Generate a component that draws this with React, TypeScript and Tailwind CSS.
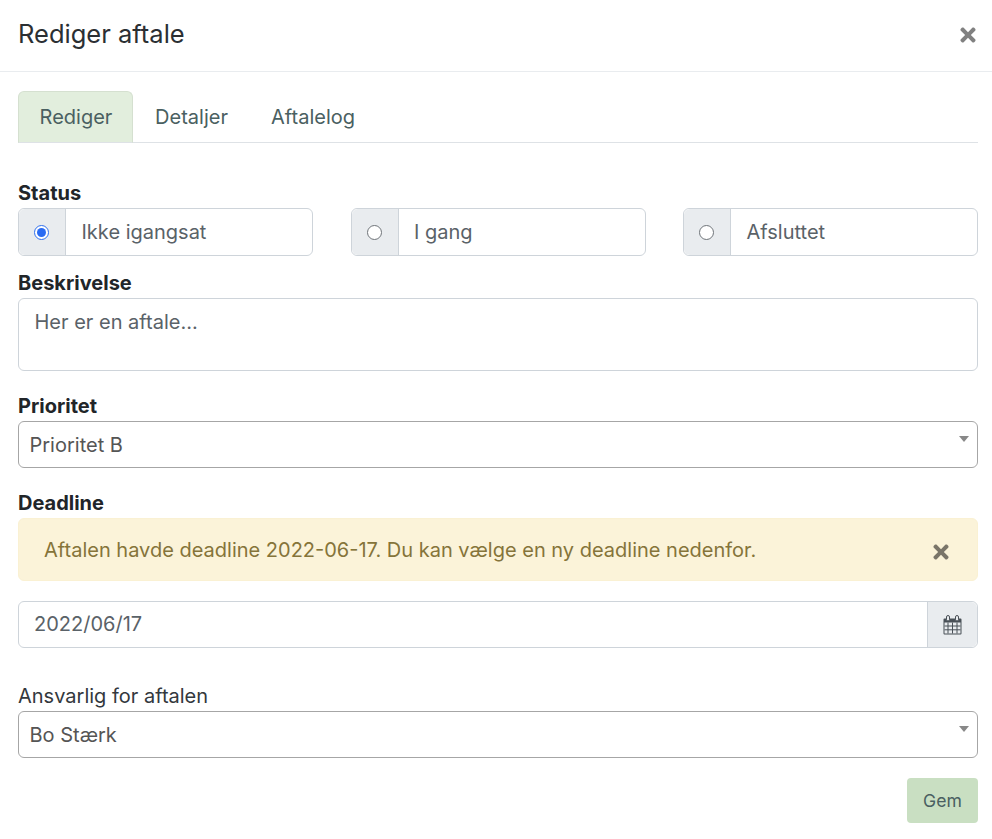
import { FaTimes } from "react-icons/fa";

function Radio({ checked }: { checked?: boolean }) {
  return (
    <span className={"flex h-[15px] w-[15px] items-center justify-center rounded-full border bg-white " + (checked ? "border-[#2f6fed]" : "border-[#6f7479]")}>
      {checked && <span className="h-[9px] w-[9px] rounded-full bg-[#2a6bf2]" />}
    </span>
  );
}

function StatusOption({ label, checked }: { label: string; checked?: boolean }) {
  return (
    <div className="flex h-12 w-[295px] rounded-md border border-[#ced4da] bg-white">
      <div className="flex w-[47px] shrink-0 items-center justify-center rounded-l-md border-r border-[#ced4da] bg-[#e9ecef] pr-[1px]">
        <Radio checked={checked} />
      </div>
      <div className="flex items-center pl-[15.5px] text-[20px] text-[#5a6268]">{label}</div>
    </div>
  );
}

function SelectBox({ value }: { value: string }) {
  return (
    <div className="relative flex h-[47px] items-center rounded-md border border-[#a6a6a6] bg-white pl-[10.5px] text-[20px] text-[#555]">
      <span className="mt-[1px]">{value}</span>
      <span className="absolute right-[8px] top-[14px] h-0 w-0 border-x-[5px] border-t-[6px] border-x-transparent border-t-[#888]" />
    </div>
  );
}

function CalendarIcon() {
  return (
    <svg width="19" height="20" viewBox="0 0 19 20" fill="none">
      <path d="M1.5 3.5h16a1 1 0 0 1 1 1v14a1 1 0 0 1-1 1h-16a1 1 0 0 1-1-1v-14a1 1 0 0 1 1-1z" fill="#495057" />
      <rect x="1.5" y="7.5" width="16" height="11" fill="#e9ecef" />
      <path d="M5 7.5v11M9.5 7.5v11M14 7.5v11M1.5 11h16M1.5 14.8h16" stroke="#495057" strokeWidth="1" />
      <rect x="3.5" y="0.5" width="3" height="5.5" rx="1.5" fill="#e9ecef" stroke="#495057" />
      <rect x="12.5" y="0.5" width="3" height="5.5" rx="1.5" fill="#e9ecef" stroke="#495057" />
    </svg>
  );
}

export default function App() {
  return (
    <div className="h-[839px] w-[992px] overflow-hidden bg-white font-['Inter',sans-serif] text-[#212529]">
      <div className="flex h-[72px] items-center justify-between border-b border-[#e9ecef] pb-[5px] pl-[18px] pr-[13px]">
        <h1 className="mt-[1px] text-[25.5px] font-normal leading-[36px] text-[#2b2f33]">Rediger aftale</h1>
        <FaTimes className="mt-[4px] text-[#808080]" size={22} />
      </div>

      <div className="px-[18px] pr-[14px]">
        <div className="mt-[19px] flex h-[52px] border-b border-[#dee2e6] text-[20px] text-[#4a6061]">
          <div className="flex h-[52px] w-[115px] items-center justify-center rounded-t-md border border-[#d5e0d0] border-b-[#dee2e6] bg-[#e2eedd] pl-[1px]">Rediger</div>
          <div className="flex w-[117px] items-center justify-center">Detaljer</div>
          <div className="flex w-[126px] items-center justify-center">Aftalelog</div>
        </div>

        <div className="mt-[38px] text-[20px] font-bold leading-[24px]">Status</div>
        <div className="mt-[3px] flex justify-between">
          <StatusOption label="Ikke igangsat" checked />
          <StatusOption label="I gang" />
          <StatusOption label="Afsluttet" />
        </div>

        <div className="mt-[15px] text-[20px] font-bold leading-[24px]">Beskrivelse</div>
        <div className="mt-[3px] h-[73px] rounded-md border border-[#ced4da] px-[15.5px] pt-[9px] text-[20px] leading-[28px] text-[#5a6268]">Her er en aftale...</div>

        <div className="mt-[23px] text-[20px] font-bold leading-[24px]">Prioritet</div>
        <div className="mt-[3px]">
          <SelectBox value="Prioritet B" />
        </div>

        <div className="mt-[23px] text-[20px] font-bold leading-[24px]">Deadline</div>
        <div className="mt-[3px] flex h-[63px] items-center justify-between rounded-md border border-[#faf1d3] bg-[#fbf3d9] pl-[25px] pr-[25px] text-[20px] text-[#85743a]">
          <span className="mt-[1px]">Aftalen havde deadline 2022-06-17. Du kan vælge en ny deadline nedenfor.</span>
          <FaTimes className="mt-[5px] text-[#7a7569]" size={22} />
        </div>

        <div className="mt-[20px] flex h-[47px] rounded-md border border-[#ced4da]">
          <div className="-mt-[1px] flex flex-1 items-center pl-[15px] text-[20px] text-[#5a6268]">2022/06/17</div>
          <div className="flex w-[50px] items-center justify-center rounded-r-md border-l border-[#ced4da] bg-[#e9ecef]">
            <CalendarIcon />
          </div>
        </div>

        <div className="mt-[36px] text-[20px] leading-[24px] text-[#33383d]">Ansvarlig for aftalen</div>
        <div className="mt-[3px]">
          <SelectBox value="Bo Stærk" />
        </div>

        <div className="mt-[20px] flex justify-end">
          <button className="h-[45px] w-[71px] rounded-[4px] bg-[#c9dfc2] pt-[1px] text-[17.6px] text-[#4a6061]">Gem</button>
        </div>
      </div>
    </div>
  );
}
